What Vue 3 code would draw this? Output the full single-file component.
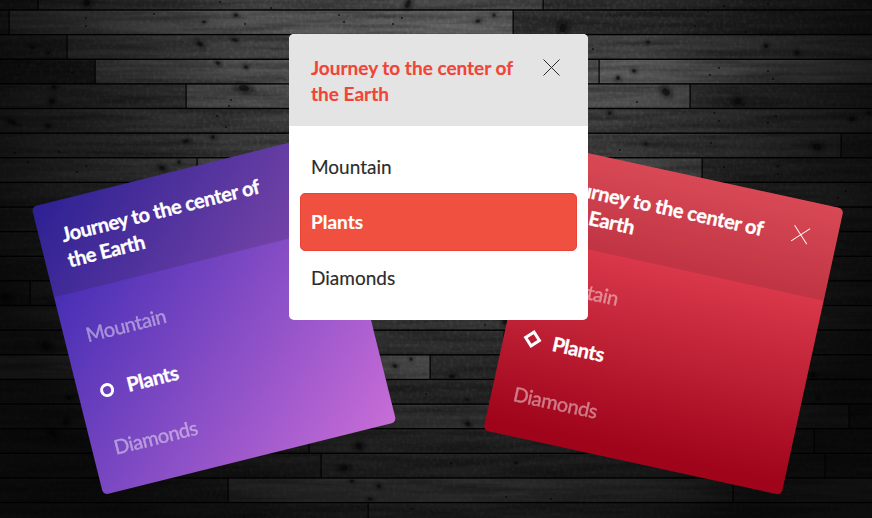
<script setup>
const cards = [
  { theme: 'violet', marker: 'ring' },
  { theme: 'crimson', marker: 'diamond' },
  { theme: 'light', marker: '' },
]
const options = ['Mountain', 'Plants', 'Diamonds']
const selected = 'Plants'

// Each row: joints between boards and the grey level of every board.
const rows = [
  { joints: [38, 543], tones: [50, 72, 50] },
  { joints: [9, 513], tones: [60, 96, 48] },
  { joints: [67], tones: [52, 76] },
  { joints: [95, 599], tones: [38, 92, 104] },
  { joints: [186, 690], tones: [62, 92, 62] },
  { joints: [], tones: [70] },
  { joints: [841], tones: [70, 50] },
  { joints: [197, 702], tones: [82, 90, 58] },
  { joints: [], tones: [66] },
  { joints: [], tones: [58] },
  { joints: [], tones: [62] },
  { joints: [], tones: [56] },
  { joints: [30], tones: [48, 60] },
  { joints: [], tones: [70] },
  { joints: [504], tones: [66, 60] },
  { joints: [430], tones: [104, 58] },
  { joints: [], tones: [58] },
  { joints: [345, 849], tones: [60, 82, 50] },
  { joints: [309, 814], tones: [54, 64, 54] },
  { joints: [321, 825], tones: [56, 64, 60] },
  { joints: [228, 733], tones: [56, 94, 86] },
  { joints: [368], tones: [60, 68] },
]
const pitch = 24.63
const boards = rows.flatMap((row, r) => {
  const edges = [0, ...row.joints, 872]
  return row.tones.map((tone, i) => ({
    x: edges[i],
    y: 10 + (r - 1) * pitch,
    w: edges[i + 1] - edges[i],
    fill: `rgb(${tone},${tone},${tone})`,
  }))
})

// x, y, rx, ry
const knots = [
  [87, 3, 5, 5], [408, 4, 4, 6], [236, 15, 4, 2.5], [204, 22, 3, 2], [200, 44, 6, 3], [235, 40, 5, 2.5],
  [32, 47, 4, 2.5], [48, 53, 2.5, 2.5], [218, 63, 4, 2.5], [246, 67, 4, 2.5], [244, 88, 9, 4.5], [52, 101, 5, 4],
  [54, 87, 4, 3], [12, 122, 8, 3], [48, 126, 5, 2.5], [186, 141, 5, 2.5], [213, 137, 4, 2.5], [162, 168, 5, 3],
  [179, 162, 2.5, 2.5], [478, 21, 4, 2.5], [494, 15, 2.5, 2.5], [563, 28, 6, 6], [648, 42, 3, 2], [766, 46, 4, 3],
  [797, 53, 4, 3], [634, 71, 4, 2.5], [618, 78, 3, 3], [666, 92, 7, 5], [738, 101, 6, 5], [610, 113, 4, 2.5],
  [852, 119, 5, 3], [869, 113, 3, 2.5], [646, 144, 2, 2], [817, 147, 7, 4.5], [778, 166, 2.5, 1.5], [6, 298, 7, 5],
  [46, 346, 8, 5], [69, 398, 4, 3], [66, 422, 4, 4], [53, 433, 7, 4], [395, 366, 4, 2.5], [411, 359, 2.5, 2.5],
  [452, 376, 6, 2.5], [468, 424, 5, 3], [467, 400, 3, 1.5], [359, 446, 6, 5], [344, 468, 7, 4], [379, 486, 4, 2.5],
  [352, 481, 4, 2], [370, 499, 4, 2], [516, 463, 3, 2], [818, 398, 3, 2], [813, 375, 4, 3], [505, 322, 4, 4],
]
const specks = [
  [86, 18], [86, 26], [154, 14], [245, 24], [220, 2], [271, 8], [339, 15], [344, 22], [393, 24], [402, 18],
  [724, 6], [768, 4], [695, 26], [746, 32], [708, 12], [593, 49], [719, 68], [710, 75], [768, 71], [773, 79],
  [714, 113], [719, 121], [776, 116], [768, 123], [637, 102], [19, 66], [18, 75], [72, 73], [231, 100], [229, 106],
  [217, 116], [226, 127], [86, 166], [77, 172], [15, 153], [59, 152], [28, 162], [724, 167], [778, 174], [711, 143],
  [838, 198], [846, 191], [485, 325], [426, 394], [451, 463], [412, 509], [506, 497], [551, 499], [244, 518], [620, 150],
]
</script>

<template>
  <main class="stage">
    <svg class="wood" viewBox="0 0 872 518" aria-hidden="true">
      <defs>
        <filter id="grain" x="0" y="0" width="100%" height="100%">
          <feTurbulence type="fractalNoise" baseFrequency="0.01 0.14" numOctaves="3" seed="8" />
          <feColorMatrix values="0 0 0 0 0  0 0 0 0 0  0 0 0 0 0  2 0 0 0 -0.7" />
        </filter>
        <filter id="fibre" x="0" y="0" width="100%" height="100%">
          <feTurbulence type="fractalNoise" baseFrequency="0.3 0.25" numOctaves="2" seed="3" />
          <feColorMatrix values="0 0 0 0 1  0 0 0 0 1  0 0 0 0 1  1.6 0 0 0 -0.7" />
        </filter>
        <filter id="soft" x="-50%" y="-50%" width="200%" height="200%">
          <feGaussianBlur stdDeviation="1.4" />
        </filter>
        <filter id="core" x="-50%" y="-50%" width="200%" height="200%">
          <feGaussianBlur stdDeviation="0.5" />
        </filter>
        <radialGradient id="shade" gradientUnits="userSpaceOnUse" cx="0" cy="0" r="1" gradientTransform="translate(440 40) scale(490 600)">
          <stop offset="0" stop-color="#000" stop-opacity="0" />
          <stop offset="0.4" stop-color="#000" stop-opacity="0.16" />
          <stop offset="0.7" stop-color="#000" stop-opacity="0.52" />
          <stop offset="0.9" stop-color="#000" stop-opacity="0.72" />
          <stop offset="1" stop-color="#000" stop-opacity="0.82" />
        </radialGradient>
      </defs>
      <rect v-for="(b, i) in boards" :key="i" :x="b.x" :y="b.y" :width="b.w" height="24.7" :fill="b.fill" />
      <rect width="872" height="518" filter="url(#grain)" opacity="0.36" />
      <rect width="872" height="518" filter="url(#fibre)" opacity="0.12" />
      <g v-for="(k, i) in knots" :key="'k' + i" :transform="`rotate(${(i * 37) % 50 - 10} ${k[0]} ${k[1]})`">
        <ellipse :cx="k[0]" :cy="k[1]" :rx="k[2] * 1.3" :ry="k[3] * 1.3" fill="#000" opacity="0.3" filter="url(#soft)" />
        <ellipse :cx="k[0]" :cy="k[1]" :rx="k[2] * 0.55" :ry="k[3] * 0.65" fill="#080808" opacity="0.7" filter="url(#core)" />
      </g>
      <circle v-for="(s, i) in specks" :key="'s' + i" :cx="s[0]" :cy="s[1]" r="1" fill="#050505" opacity="0.75" />
      <g v-for="(b, i) in boards" :key="'e' + i">
        <rect :x="b.x" :y="b.y - 0.7" :width="b.w" height="1.4" fill="#000" />
        <rect :x="b.x" :y="b.y + 0.8" :width="b.w" height="0.8" fill="#fff" opacity="0.05" />
        <rect v-if="b.x" :x="b.x - 0.5" :y="b.y" width="1.2" height="24.6" fill="#000" />
      </g>
      <rect width="872" height="518" fill="url(#shade)" />
    </svg>

    <section v-for="card in cards" :key="card.theme" class="card" :class="card.theme">
      <header class="head">
        <h2 class="title">Journey to the center of the Earth</h2>
        <svg class="close" viewBox="0 0 17 17"><path d="M.5 .5l16 16M16.5 .5l-16 16" /></svg>
      </header>
      <ul class="list">
        <li v-for="name in options" :key="name" class="item" :class="{ active: name === selected }">
          <i v-if="card.marker && name === selected" class="marker" :class="card.marker"></i>
          <span class="label">{{ name }}</span>
        </li>
      </ul>
    </section>
  </main>
</template>

<style>
body {
  margin: 0;
  background: #0a0a0a;
}
</style>

<style scoped>
.stage {
  position: relative;
  width: 872px;
  height: 518px;
  overflow: hidden;
  font-family: Lato, "Liberation Sans", sans-serif;
}
.wood {
  display: block;
  width: 872px;
  height: 518px;
}
.card {
  position: absolute;
  box-sizing: border-box;
  border-radius: 5px;
  overflow: hidden;
  font-size: 20px;
  letter-spacing: -0.4px;
  -webkit-text-stroke: 0.35px currentColor;
}
.head {
  box-sizing: border-box;
  display: flex;
  justify-content: space-between;
  align-items: flex-start;
}
.title {
  margin: 0;
  width: 212px;
  font-size: inherit;
  line-height: 26px;
  font-weight: 700;
}
.close {
  width: 17px;
  height: 17px;
  fill: none;
  stroke: currentColor;
  stroke-width: 1;
}
.list {
  margin: 0;
  list-style: none;
}
.item {
  display: flex;
  align-items: center;
  box-sizing: border-box;
}
.marker {
  box-sizing: border-box;
  border: 3px solid #fff;
}
.ring {
  width: 14px;
  height: 14px;
  border-radius: 50%;
  margin: 3px 13.5px 0 0;
}
.diamond {
  width: 13.4px;
  height: 13.4px;
  margin: 1px 14px 0 0;
  transform: rotate(45deg);
}

.light {
  left: 289px;
  top: 34px;
  width: 299px;
  height: 286px;
  background: #fff;
  color: #2b2b2b;
  font-size: 19px;
  letter-spacing: 0;
  -webkit-text-stroke-width: 0.15px;
}
.light .head {
  height: 92px;
  padding: 21px 28px 0 22px;
  background: #e4e4e4;
}
.light .title {
  color: #f04438;
}
.light .close {
  margin-top: 4px;
}
.light .list {
  padding: 11px 11px 0;
}
.light .item {
  height: 58px;
  margin-bottom: -2.3px;
  padding-left: 11px;
  border-radius: 5px;
}
.light .active {
  background: #f05040;
  border: 1px solid #ea4335;
  padding-left: 10px;
  color: #fff;
  font-weight: 700;
}

.violet {
  left: 63.2px;
  top: 165.9px;
  width: 301.6px;
  height: 297px;
  transform: rotate(-14deg);
  background: linear-gradient(135deg, #3023ae 0%, #c86dd7 100%);
  color: #fff;
}
.violet .head {
  height: 92.6px;
  padding: 20.5px 26px 0 22.5px;
  background: rgba(30, 26, 20, 0.17);
}
.violet .close {
  margin-top: 4px;
}
.violet .list {
  padding: 15px 22px 0;
}
.violet .item {
  height: 58px;
}
.crimson {
  left: 511.4px;
  top: 173.4px;
  width: 305px;
  height: 293px;
  transform: rotate(12.3deg);
  background: linear-gradient(180deg, #f5515f 0%, #d9384a 32%, #9f041b 96%);
  color: #fff;
}
.crimson .head {
  height: 93.8px;
  padding: 22.5px 28px 0 25px;
  background: rgba(40, 30, 30, 0.14);
}
.crimson .title {
  letter-spacing: -0.3px;
}
.crimson .close {
  margin-top: 3px;
}
.crimson .list {
  padding: 13px 22px 0;
}
.crimson .item {
  height: 57.4px;
}
.violet .label,
.crimson .label {
  opacity: 0.45;
}
.violet .active .label,
.crimson .active .label {
  opacity: 1;
  font-weight: 700;
}
</style>
